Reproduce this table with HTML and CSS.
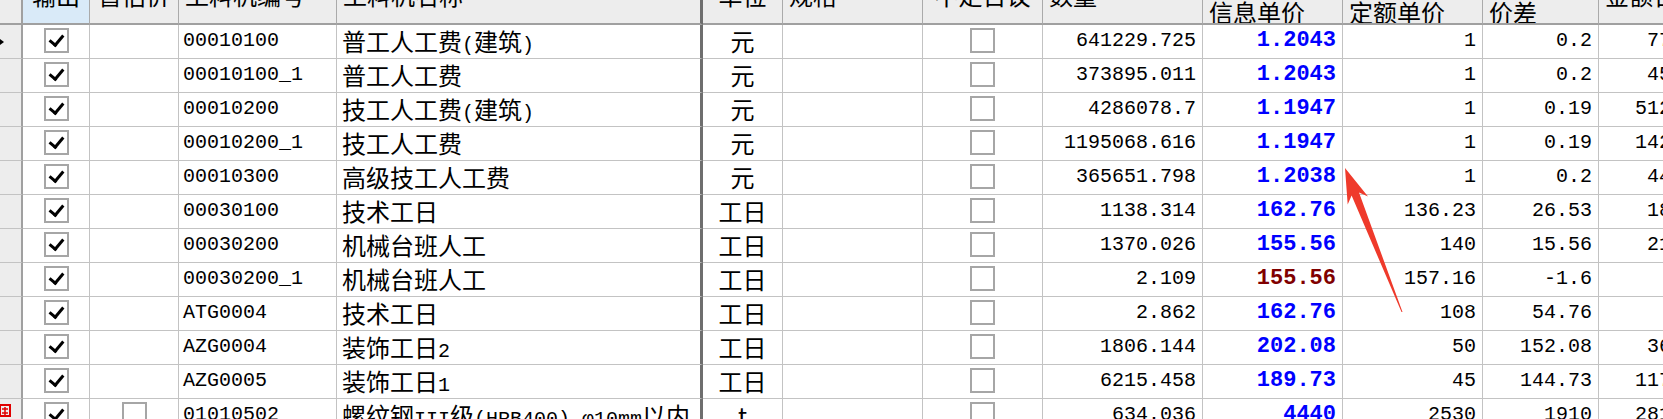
FILE: index.html
```html
<!DOCTYPE html>
<html lang="zh-CN">
<head>
    <meta charset="UTF-8">
    <title>人材机汇总</title>
    <link rel="stylesheet" href="styles.css">
</head>
<body>
    <div class="grid">
        <!-- cabeçalho -->
        <div class="head">
            <div class="c rh"></div>
            <div class="c ctr sel"><span>输出</span></div>
            <div class="c ctr"><span>暂估价</span></div>
            <div class="c"><span>工料机编号</span></div>
            <div class="c"><span>工料机名称</span></div>
            <div class="c ctr"><span>单位</span></div>
            <div class="c"><span>规格</span></div>
            <div class="c ctr"><span>不走日议</span></div>
            <div class="c"><span>数量</span></div>
            <div class="c low"><span>信息单价</span></div>
            <div class="c low"><span>定额单价</span></div>
            <div class="c low"><span>价差</span></div>
            <div class="c"><span>金额合计</span></div>
        </div>

        <div class="row">
            <div class="c rh cur"></div>
            <div class="c ck"><span class="box on"></span></div>
            <div class="c"></div>
            <div class="c code">00010100</div>
            <div class="c name">普工人工费<span class="lat">(</span>建筑<span class="lat">)</span></div>
            <div class="c unit">元</div>
            <div class="c"></div>
            <div class="c ck"><span class="box"></span></div>
            <div class="c num">641229.725</div>
            <div class="c num price">1.2043</div>
            <div class="c num">1</div>
            <div class="c num">0.2</div>
            <div class="c num">772232.95</div>
        </div>
        <div class="row">
            <div class="c rh"></div>
            <div class="c ck"><span class="box on"></span></div>
            <div class="c"></div>
            <div class="c code">00010100_1</div>
            <div class="c name">普工人工费</div>
            <div class="c unit">元</div>
            <div class="c"></div>
            <div class="c ck"><span class="box"></span></div>
            <div class="c num">373895.011</div>
            <div class="c num price">1.2043</div>
            <div class="c num">1</div>
            <div class="c num">0.2</div>
            <div class="c num">450281.76</div>
        </div>
        <div class="row">
            <div class="c rh"></div>
            <div class="c ck"><span class="box on"></span></div>
            <div class="c"></div>
            <div class="c code">00010200</div>
            <div class="c name">技工人工费<span class="lat">(</span>建筑<span class="lat">)</span></div>
            <div class="c unit">元</div>
            <div class="c"></div>
            <div class="c ck"><span class="box"></span></div>
            <div class="c num">4286078.7</div>
            <div class="c num price">1.1947</div>
            <div class="c num">1</div>
            <div class="c num">0.19</div>
            <div class="c num">5120578.22</div>
        </div>
        <div class="row">
            <div class="c rh"></div>
            <div class="c ck"><span class="box on"></span></div>
            <div class="c"></div>
            <div class="c code">00010200_1</div>
            <div class="c name">技工人工费</div>
            <div class="c unit">元</div>
            <div class="c"></div>
            <div class="c ck"><span class="box"></span></div>
            <div class="c num">1195068.616</div>
            <div class="c num price">1.1947</div>
            <div class="c num">1</div>
            <div class="c num">0.19</div>
            <div class="c num">1427748.48</div>
        </div>
        <div class="row">
            <div class="c rh"></div>
            <div class="c ck"><span class="box on"></span></div>
            <div class="c"></div>
            <div class="c code">00010300</div>
            <div class="c name">高级技工人工费</div>
            <div class="c unit">元</div>
            <div class="c"></div>
            <div class="c ck"><span class="box"></span></div>
            <div class="c num">365651.798</div>
            <div class="c num price">1.2038</div>
            <div class="c num">1</div>
            <div class="c num">0.2</div>
            <div class="c num">440171.64</div>
        </div>
        <div class="row">
            <div class="c rh"></div>
            <div class="c ck"><span class="box on"></span></div>
            <div class="c"></div>
            <div class="c code">00030100</div>
            <div class="c name">技术工日</div>
            <div class="c unit">工日</div>
            <div class="c"></div>
            <div class="c ck"><span class="box"></span></div>
            <div class="c num">1138.314</div>
            <div class="c num price">162.76</div>
            <div class="c num">136.23</div>
            <div class="c num">26.53</div>
            <div class="c num">185271.99</div>
        </div>
        <div class="row">
            <div class="c rh"></div>
            <div class="c ck"><span class="box on"></span></div>
            <div class="c"></div>
            <div class="c code">00030200</div>
            <div class="c name">机械台班人工</div>
            <div class="c unit">工日</div>
            <div class="c"></div>
            <div class="c ck"><span class="box"></span></div>
            <div class="c num">1370.026</div>
            <div class="c num price">155.56</div>
            <div class="c num">140</div>
            <div class="c num">15.56</div>
            <div class="c num">213121.24</div>
        </div>
        <div class="row">
            <div class="c rh"></div>
            <div class="c ck"><span class="box on"></span></div>
            <div class="c"></div>
            <div class="c code">00030200_1</div>
            <div class="c name">机械台班人工</div>
            <div class="c unit">工日</div>
            <div class="c"></div>
            <div class="c ck"><span class="box"></span></div>
            <div class="c num">2.109</div>
            <div class="c num price red">155.56</div>
            <div class="c num">157.16</div>
            <div class="c num">-1.6</div>
            <div class="c num">328.08</div>
        </div>
        <div class="row">
            <div class="c rh"></div>
            <div class="c ck"><span class="box on"></span></div>
            <div class="c"></div>
            <div class="c code">ATG0004</div>
            <div class="c name">技术工日</div>
            <div class="c unit">工日</div>
            <div class="c"></div>
            <div class="c ck"><span class="box"></span></div>
            <div class="c num">2.862</div>
            <div class="c num price">162.76</div>
            <div class="c num">108</div>
            <div class="c num">54.76</div>
            <div class="c num">465.82</div>
        </div>
        <div class="row">
            <div class="c rh"></div>
            <div class="c ck"><span class="box on"></span></div>
            <div class="c"></div>
            <div class="c code">AZG0004</div>
            <div class="c name">装饰工日<span class="lat">2</span></div>
            <div class="c unit">工日</div>
            <div class="c"></div>
            <div class="c ck"><span class="box"></span></div>
            <div class="c num">1806.144</div>
            <div class="c num price">202.08</div>
            <div class="c num">50</div>
            <div class="c num">152.08</div>
            <div class="c num">364985.58</div>
        </div>
        <div class="row">
            <div class="c rh"></div>
            <div class="c ck"><span class="box on"></span></div>
            <div class="c"></div>
            <div class="c code">AZG0005</div>
            <div class="c name">装饰工日<span class="lat">1</span></div>
            <div class="c unit">工日</div>
            <div class="c"></div>
            <div class="c ck"><span class="box"></span></div>
            <div class="c num">6215.458</div>
            <div class="c num price">189.73</div>
            <div class="c num">45</div>
            <div class="c num">144.73</div>
            <div class="c num">1179258.85</div>
        </div>
        <div class="row">
            <div class="c rh mat">
                <svg width="12" height="16" viewBox="0 0 12 16">
                    <rect x="1" y="4" width="10" height="11" fill="none" stroke="#e00000" stroke-width="2"/>
                    <path d="M3 8h6M6 6v8M3 12h6" stroke="#e00000" stroke-width="1.5"/>
                </svg>
            </div>
            <div class="c ck"><span class="box on"></span></div>
            <div class="c ck"><span class="box"></span></div>
            <div class="c code">01010502</div>
            <div class="c name">螺纹钢<span class="lat">III</span>级<span class="lat">(HRB400) φ10mm</span>以内</div>
            <div class="c unit">t</div>
            <div class="c"></div>
            <div class="c ck"><span class="box"></span></div>
            <div class="c num">634.036</div>
            <div class="c num price">4440</div>
            <div class="c num">2530</div>
            <div class="c num">1910</div>
            <div class="c num">2815119.84</div>
        </div>
    </div>

    <!-- seta vermelha de anotação -->
    <svg class="arrow" width="1663" height="419" viewBox="0 0 1663 419">
        <polygon points="1345,168 1368,196.5 1359,192.5 1402.5,312 1401.5,312 1351.6,195.5 1347.7,204.5" fill="#ef3a2b"/>
    </svg>
</body>
</html>
```

FILE: styles.css
```css
* {
    margin: 0;
    padding: 0;
    box-sizing: border-box;
}

body {
    width: 1663px;
    height: 419px;
    overflow: hidden;
    background-color: #fff;
    color: #000;
    font-family: "Noto Sans CJK SC", sans-serif;
    font-size: 24px;
    position: relative;
}

.grid {
    width: 1762px;
}

.head,
.row {
    display: grid;
    grid-template-columns: 23px 67px 89px 158px 366px 80px 140px 120px 160px 140px 140px 116px 163px;
}

.c {
    height: 34px;
    line-height: 31px;
    padding: 0 6px;
    border-right: 1px solid #c3c3c3;
    border-bottom: 1px solid #c3c3c3;
    white-space: nowrap;
    overflow: hidden;
}

/* coluna do nome com divisória grossa */
.head .c:nth-child(5),
.row .c:nth-child(5) {
    border-right: 3px solid #6e6e6e;
}

/* cabeçalho */
.head .c {
    height: 25px;
    line-height: 24px;
    background-color: #ededed;
    border-right: 1px solid #aaa;
    border-bottom: 2px solid #a0a0a0;
}

.head .c span {
    display: block;
    margin-top: -17px;
}

.head .c.low span {
    margin-top: 0;
}

.head .c.sel {
    background-color: #d9eaf8;
}

.ctr {
    text-align: center;
}

/* coluna de linhas à esquerda */
.c.rh {
    padding: 0;
    background-color: #ededed;
    border-right: 2px solid #a0a0a0;
    display: flex;
    align-items: center;
}

.rh.cur::before {
    content: "";
    border-left: 4px solid #000;
    border-top: 3px solid transparent;
    border-bottom: 3px solid transparent;
    margin-top: 1px;
}

.rh.mat {
    align-items: flex-start;
}

.rh.mat svg {
    margin-left: -1px;
    margin-top: 2px;
}

.code {
    padding-left: 4px;
    font-family: "Liberation Mono", monospace;
    font-size: 20px;
}

.name {
    padding-left: 5px;
}

.name .lat {
    font-family: "Liberation Mono", monospace;
    font-size: 20px;
}

.unit {
    text-align: center;
}

.num {
    text-align: right;
    font-family: "Liberation Mono", monospace;
    font-size: 20px;
}

.price {
    color: #0000ff;
    font-weight: bold;
    font-size: 22px;
}

.price.red {
    color: #800000;
}

/* caixas de seleção */
.ck {
    display: flex;
    justify-content: center;
    align-items: center;
    padding: 0;
}

.box {
    width: 25px;
    height: 25px;
    border: 2px solid #a6a6a6;
    background-color: #fff;
    display: flex;
    justify-content: center;
    align-items: center;
    margin-top: -2px;
}

.box.on::after {
    content: "";
    width: 6px;
    height: 11px;
    border: solid #000;
    border-width: 0 3px 3px 0;
    transform: rotate(40deg);
    margin-top: -3px;
}

.arrow {
    position: absolute;
    top: 0;
    left: 0;
    pointer-events: none;
}
```
